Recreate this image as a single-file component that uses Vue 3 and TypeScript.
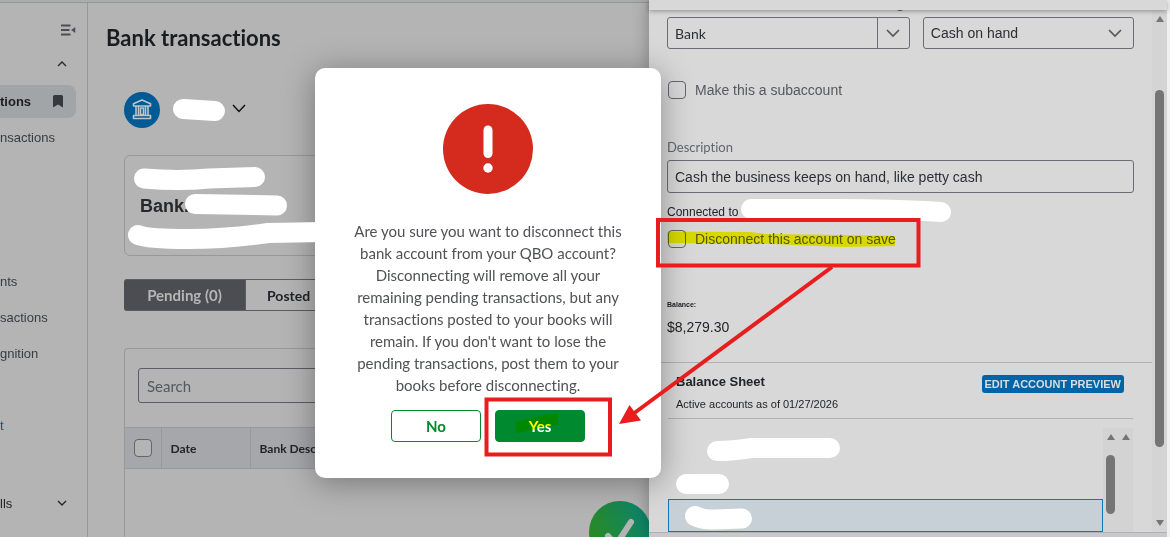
<script setup lang="ts">
import { ref } from 'vue'

interface NavItem {
  label: string
  kind?: 'active' | 'link' | 'group'
}

const navGroups: NavItem[][] = [
  [{ label: 'tions', kind: 'active' }, { label: 'nsactions' }],
  [{ label: 'nts' }, { label: 'sactions' }, { label: 'gnition' }],
  [{ label: 't', kind: 'link' }],
  [{ label: 'lls', kind: 'group' }],
]

const accountType = ref('Bank')
const detailType = ref('Cash on hand')
const description = ref('Cash the business keeps on hand, like petty cash')
const subaccount = ref(false)
const disconnect = ref(false)
const search = ref('')
</script>

<template>
  <div class="page">
    <div class="topbar"></div>
    <div class="shell">
      <nav class="sidebar">
        <button class="icon-btn collapse" aria-label="Collapse menu">
          <svg width="16" height="12" viewBox="0 0 16 12">
            <path d="M1 1.500h9.500M1 6h8.500M1 10.500h9.500" stroke="#4c4f54" stroke-width="1.800" />
            <path d="M15 3.500v5L11.500 6z" fill="#4c4f54" stroke="#4c4f54" stroke-width="0.500" />
          </svg>
        </button>
        <button class="icon-btn fold" aria-label="Fold section">
          <svg width="10" height="6" viewBox="0 0 10 6">
            <path d="M1 5l4-4 4 4" fill="none" stroke="#26282b" stroke-width="1.400" />
          </svg>
        </button>
        <ul v-for="(group, i) in navGroups" :key="i" class="nav-group">
          <li v-for="item in group" :key="item.label">
            <a href="#" :class="['nav-item', item.kind]">
              <span>{{ item.label }}</span>
              <svg v-if="item.kind === 'active'" width="10" height="13" viewBox="0 0 10 13">
                <path d="M0 1.500Q0 0 1.500 0h7Q10 0 10 1.500V12.500L5 9.500 0 12.500z" fill="#363a3f" />
              </svg>
              <svg v-if="item.kind === 'group'" width="10" height="6" viewBox="0 0 10 6">
                <path d="M1 1l4 4 4-4" fill="none" stroke="#26282b" stroke-width="1.400" />
              </svg>
            </a>
          </li>
        </ul>
      </nav>

      <main class="main">
        <h1>Bank transactions</h1>
        <div class="content">
          <div class="account">
            <svg width="36" height="36" viewBox="0 0 36 36">
              <circle cx="18" cy="18" r="18" fill="#005a96" />
              <g fill="none" stroke="#bfc4c8" stroke-width="1.600" stroke-linejoin="round">
                <path d="M9.500 14v-2.200L18 8l8.500 3.800V14z" />
                <path d="M12 14v9M14.500 14v9M21.500 14v9M24 14v9" />
                <path d="M16.500 16h3v6.500h-3z" />
                <path d="M9.500 23.500h17v3h-17z" />
              </g>
            </svg>
            <button class="icon-btn" aria-label="Choose account">
              <svg width="14" height="12" viewBox="0 0 14 12">
                <path d="M1 1l6 6.500L13 1" fill="none" stroke="#111" stroke-width="1.500" />
              </svg>
            </button>
          </div>

          <section class="card"><strong>Bank.</strong></section>

          <div class="tabs">
            <button class="tab selected">Pending (0)</button>
            <button class="tab">Posted</button>
          </div>

          <section class="panel">
            <div class="search">
              <input v-model="search" type="text" placeholder="Search" aria-label="Search" />
            </div>
            <table>
              <thead>
                <tr>
                  <th class="pick"><input type="checkbox" aria-label="Select all" /></th>
                  <th class="date">Date</th>
                  <th>Bank Desc</th>
                </tr>
              </thead>
            </table>
          </section>
        </div>
      </main>
    </div>

    <svg class="done" width="62" height="62" viewBox="0 0 62 62">
      <defs>
        <linearGradient id="done-fill" x1="0" y1="0.7" x2="1" y2="0.3">
          <stop offset="0" stop-color="#2b8a1c" />
          <stop offset="1" stop-color="#0d8570" />
        </linearGradient>
      </defs>
      <circle cx="31" cy="31" r="31" fill="url(#done-fill)" />
      <path d="M19 35l8 9L42 21" fill="none" stroke="#b4b4b4" stroke-width="6" stroke-linecap="round" stroke-linejoin="round" />
    </svg>

    <aside class="drawer">
      <div class="drawer-head"></div>
      <div class="drawer-body">
        <form class="form" @submit.prevent>
          <div class="fields">
            <div class="combo">
              <input v-model="accountType" type="text" aria-label="Account type" />
              <button type="button" aria-label="Open account types">
                <svg width="14" height="9" viewBox="0 0 14 9">
                  <path d="M1 1l6 6 6-6" fill="none" stroke="#55585e" stroke-width="1.700" />
                </svg>
              </button>
            </div>
            <div class="select">
              <select v-model="detailType" aria-label="Detail type">
                <option>Cash on hand</option>
              </select>
              <svg width="14" height="9" viewBox="0 0 14 9">
                <path d="M1 1l6 6 6-6" fill="none" stroke="#55585e" stroke-width="1.700" />
              </svg>
            </div>
          </div>
          <label class="check sub"><input v-model="subaccount" type="checkbox" /><span>Make this a subaccount</span></label>
          <label class="desc-label" for="description">Description</label>
          <input id="description" v-model="description" class="desc" type="text" />
          <p class="connected">Connected to</p>
          <label class="check"><input v-model="disconnect" type="checkbox" /><span>Disconnect this account on save</span></label>
          <p class="balance-label">Balance:</p>
          <p class="balance">$8,279.30</p>
          <section class="preview">
            <header>
              <div>
                <h2>Balance Sheet</h2>
                <p>Active accounts as of 01/27/2026</p>
              </div>
              <button type="button" class="edit">EDIT ACCOUNT PREVIEW</button>
            </header>
            <div class="list">
              <div class="rows"><div class="row-selected"></div></div>
              <div class="tracks">
                <div class="track">
                  <i class="arrow up"></i>
                  <i class="thumb"></i>
                </div>
                <div class="track"><i class="arrow up"></i></div>
              </div>
            </div>
          </section>
        </form>
        <div class="scrollbar">
          <i class="arrow up"></i>
          <i class="thumb"></i>
          <i class="arrow down"></i>
        </div>
      </div>
      <div class="drawer-foot"></div>
    </aside>

    <div class="overlay">
      <div class="modal" role="dialog" aria-modal="true" aria-describedby="warning">
        <svg width="90" height="90" viewBox="0 0 90 90">
          <circle cx="45" cy="45" r="45" fill="#d52b1e" />
          <path d="M45 26v23.500" stroke="#fff" stroke-width="9" stroke-linecap="round" />
          <circle cx="45" cy="64" r="4.700" fill="#fff" />
        </svg>
        <p id="warning">
          Are you sure you want to disconnect this<br />bank account from your QBO account?<br />Disconnecting
          will remove all your<br />remaining pending transactions, but any<br />transactions posted to your books
          will<br />remain. If you don't want to lose the<br />pending transactions, post them to your<br />books
          before disconnecting.
        </p>
        <div class="actions">
          <button class="no">No</button>
          <button class="yes">Yes</button>
        </div>
      </div>
    </div>

    <svg class="marks highlight" width="1170" height="537" aria-hidden="true">
      <path d="M667 231.500L750 232l15 2 80 1 50 1v10l-50 1-30-1-40-2-108-1z" fill="#ff0" />
      <path d="M516 421.500l30-7 12-1v11l-12 2-30 7z" fill="#ff0" />
    </svg>

    <svg class="marks" width="1170" height="537" aria-hidden="true">
      <g fill="none" stroke="#fff" stroke-width="20" stroke-linecap="round" stroke-linejoin="round">
        <path d="M183 109l32 2" />
        <path d="M144 178.500q35 3 65 0l46-1.500" />
        <path d="M195 204l82 1.500" />
        <path d="M138 235q10 4 50 4t80-6l55-1" />
        <path d="M751 209h85q60 0 105 3" />
        <path d="M717 451q15 0 35-3h78" />
        <path d="M686 484h33" />
        <path d="M695 516q8 4 20 3.500t27-1" />
      </g>
      <path d="M897 10q3 2 6 0z" fill="#44464a" />
      <g fill="none" stroke="#e91d1d" stroke-width="4">
        <path d="M658 220h260.500v45.500H658z" />
        <path d="M486.500 399.500h123.500v55H486.500z" />
        <path d="M832 267L633 414" />
      </g>
      <path d="M619 424l10.500-19 11.500 15.500z" fill="#e91d1d" />
    </svg>
  </div>
</template>

<style>
body {
  margin: 0;
  background: #b4b4b4;
}
</style>

<style scoped>
* {
  box-sizing: border-box;
}
.page {
  position: relative;
  display: flex;
  flex-direction: column;
  min-height: 100vh;
  overflow: hidden;
  background: #b4b4b4;
  color: #222427;
  font-family: "Liberation Sans", Arial, sans-serif;
  font-size: 14px;
  font-variant-ligatures: none;
}
button,
input,
select {
  font: inherit;
  font-variant-ligatures: none;
  color: inherit;
  margin: 0;
}
h1,
h2,
p,
ul {
  margin: 0;
  padding: 0;
}
svg {
  display: block;
  flex: none;
}
.topbar {
  height: 3px;
  background: #a9aeab;
  border-bottom: 1px solid #9396a0;
}
.shell {
  display: flex;
  flex: 1;
}
.icon-btn {
  display: block;
  padding: 0;
  border: 0;
  background: none;
}
.sidebar {
  width: 88px;
  flex: none;
  display: flex;
  flex-direction: column;
  border-right: 1px solid #96989c;
}
.collapse {
  margin: 21px 0 0 60px;
}
.fold {
  margin: 25px 0 0 57px;
}
.nav-group {
  list-style: none;
  margin-top: 16px;
}
.nav-group:nth-of-type(2) {
  margin-top: 108px;
}
.nav-group:nth-of-type(3) {
  margin-top: 36px;
}
.nav-group:nth-of-type(4) {
  margin-top: 42px;
}
.nav-item {
  display: flex;
  align-items: center;
  justify-content: space-between;
  height: 36px;
  width: 76px;
  font-size: 13px;
  color: #393c42;
  text-decoration: none;
}
.nav-item.active {
  height: 33px;
  margin: 2px 0 1px;
  padding-right: 13px;
  border-radius: 0 8px 8px 0;
  background: #a2a5a8;
  color: #1c1e21;
  font-weight: 700;
}
.nav-item.link {
  color: #1f4f80;
}
.nav-item.group {
  padding-right: 9px;
  color: #222427;
}
.main {
  flex: 1;
  padding: 21px 0 0 18px;
  display: flex;
  flex-direction: column;
}
h1 {
  font-family: Lato, sans-serif;
  font-size: 22px;
  line-height: 28px;
  font-weight: 700;
  color: #1a1c20;
}
.content {
  flex: 1;
  display: flex;
  flex-direction: column;
  padding: 40px 0 0 18px;
}
.account {
  display: flex;
  align-items: center;
  gap: 72px;
}
.card {
  height: 101px;
  margin-top: 27px;
  padding: 40px 15px;
  border: 1px solid #96989c;
  border-radius: 6px;
  font-size: 18px;
  line-height: 20px;
  color: #26282b;
}
.tabs {
  display: flex;
  margin-top: 23px;
  font-family: Lato, sans-serif;
}
.tab {
  height: 32px;
  padding: 0 21px;
  border: 1px solid #5b5d63;
  border-left: 0;
  background: none;
  font-size: 14px;
  font-weight: 700;
}
.tab.selected {
  width: 122px;
  padding: 0;
  border-radius: 3px 0 0 3px;
  background: #4c4d52;
  color: #b4b6b8;
  font-size: 15px;
}
.panel {
  flex: 1;
  margin-top: 37px;
  border: 1px solid #96989c;
  border-bottom: 0;
  border-radius: 4px 4px 0 0;
  font-family: Lato, sans-serif;
}
.search {
  padding: 19px 13px 24px;
}
.search input {
  display: block;
  width: 60%;
  height: 35px;
  padding: 0 8px;
  border: 1px solid #5b5d63;
  border-radius: 3px;
  background: none;
  font-size: 15px;
}
.search input::placeholder {
  color: #55585e;
  opacity: 1;
}
table {
  width: 100%;
  border-collapse: collapse;
  table-layout: fixed;
}
th {
  height: 41px;
  padding: 0 9px;
  border: 1px solid #96989c;
  border-left: 0;
  background: #a5a7aa;
  font-size: 12px;
  font-weight: 700;
  text-align: left;
}
.pick {
  width: 36px;
}
.date {
  width: 89px;
}
input[type="checkbox"] {
  appearance: none;
  display: block;
  flex: none;
  width: 18px;
  height: 18px;
  border: 1px solid #63666c;
  border-radius: 4px;
}
.pick input {
  background: #b4b4b4;
}
.done {
  position: absolute;
  left: 589px;
  top: 501px;
}
.drawer {
  position: absolute;
  top: 0;
  right: 0;
  bottom: 0;
  width: 521px;
  display: flex;
  flex-direction: column;
  background: #d8d8d8;
  border-right: 3px solid #f0f0f0;
  box-shadow: 0 0 16px rgba(0, 0, 0, 0.3);
}
.drawer-head {
  position: relative;
  flex: none;
  height: 10px;
  background: #d8d8d8;
  box-shadow: 0 1px 5px rgba(0, 0, 0, 0.35);
}
.drawer-body {
  flex: 1;
  display: flex;
  min-height: 0;
}
.drawer-foot {
  flex: none;
  height: 5px;
  background: #c9c9cb;
  border-top: 1px solid #b0b1b4;
}
.form {
  flex: 1;
  display: flex;
  flex-direction: column;
  padding: 7px 18px 0;
}
.fields {
  display: flex;
  gap: 13px;
}
.combo {
  display: flex;
  flex: 243;
  height: 32px;
  border: 1px solid #6b6e75;
  border-radius: 3px;
}
.combo input {
  flex: 1;
  min-width: 0;
  padding: 0 7px;
  border: 0;
  background: none;
  color: #2d2f33;
  font-family: Lato, sans-serif;
  font-size: 14px;
}
.combo button {
  width: 32px;
  padding: 0 8px;
  border: 0;
  border-left: 1px solid #6b6e75;
  background: none;
}
.select {
  position: relative;
  display: flex;
  flex: 211;
  align-items: center;
  height: 32px;
  border: 1px solid #6b6e75;
  border-radius: 3px;
}
.select select {
  appearance: none;
  width: 100%;
  height: 100%;
  padding: 0 7px;
  border: 0;
  background: none;
  color: #2d2f33;
}
.select svg {
  position: absolute;
  right: 11px;
  pointer-events: none;
}
.check {
  display: flex;
  align-items: center;
  gap: 9px;
  height: 18px;
  margin: 10px 0 0 1px;
  line-height: 18px;
  color: #55585e;
}
.check.sub {
  margin-top: 32px;
}
.desc-label {
  margin-top: 40px;
  font-family: Lato, sans-serif;
  font-size: 13px;
  line-height: 16px;
  color: #63666c;
}
.desc {
  height: 33px;
  margin-top: 5px;
  padding: 0 7px;
  border: 1px solid #6b6e75;
  border-radius: 3px;
  background: none;
  color: #2d2f33;
}
.connected {
  margin-top: 11px;
  font-size: 12px;
  line-height: 16px;
}
.balance-label {
  margin-top: 53px;
  font-size: 7px;
  line-height: 8px;
  font-weight: 700;
}
.balance {
  margin-top: 10px;
  line-height: 16px;
}
.preview {
  flex: 1;
  display: flex;
  flex-direction: column;
  margin: 27px -18px 0;
  padding: 0 19px;
  border-top: 1px solid #b0b1b4;
}
.preview header {
  display: flex;
  justify-content: space-between;
  align-items: flex-start;
  height: 56px;
  padding: 11px 9px 0 8px;
  border-bottom: 1px solid #b0b1b4;
}
.preview h2 {
  font-size: 13px;
  line-height: 16px;
}
.preview p {
  margin-top: 6px;
  font-size: 11px;
  line-height: 16px;
}
.edit {
  height: 18px;
  margin-top: 1px;
  padding: 0 3px;
  border: 0;
  border-radius: 3px;
  background: #0065a8;
  color: #d8dde2;
  font-size: 11px;
  font-weight: 700;
}
.list {
  flex: 1;
  display: flex;
  padding-top: 9px;
}
.rows {
  flex: 1;
  display: flex;
  flex-direction: column;
  justify-content: flex-end;
}
.row-selected {
  height: 33px;
  border: 1px solid #0b7ab8;
  background: #c6d0d6;
}
.tracks {
  display: flex;
  background: #d3d3d3;
}
.track {
  display: flex;
  flex-direction: column;
  align-items: center;
  width: 15px;
  padding-top: 6px;
}
.track .thumb {
  width: 9px;
  height: 59px;
  margin-top: 15px;
  border-radius: 5px;
  background: #757575;
}
.arrow {
  border: 4px solid transparent;
}
.arrow.up {
  border-top: 0;
  border-bottom: 6px solid #757575;
}
.arrow.down {
  border-bottom: 0;
  border-top: 6px solid #757575;
}
.scrollbar {
  display: flex;
  flex-direction: column;
  align-items: center;
  width: 15px;
  padding: 6px 0;
  background: #d4d4d4;
}
.scrollbar .thumb {
  width: 9px;
  height: 70%;
  margin: 68px 0 auto;
  border-radius: 5px;
  background: #757575;
}
.overlay {
  position: absolute;
  inset: 0;
  display: flex;
  align-items: flex-start;
  justify-content: center;
  padding: 68px 194px 0 0;
}
.modal {
  display: flex;
  flex-direction: column;
  align-items: center;
  width: 346px;
  padding: 36px 20px;
  border-radius: 10px;
  background: #fff;
  box-shadow: 0 4px 32px rgba(0, 0, 0, 0.35);
}
.modal p {
  margin-top: 26px;
  font-family: Lato, sans-serif;
  font-size: 15px;
  line-height: 22px;
  color: #505256;
  text-align: center;
  white-space: nowrap;
}
.actions {
  display: flex;
  gap: 14px;
  margin-top: 14px;
}
.actions button {
  width: 90px;
  height: 32px;
  border: 1px solid #00892e;
  border-radius: 4px;
  font-family: Lato, sans-serif;
  font-size: 15px;
  font-weight: 700;
}
.actions .no {
  background: #fff;
  color: #00892e;
}
.actions .yes {
  background: #00892e;
  color: #fff;
}
.marks {
  position: absolute;
  left: 0;
  top: 0;
  pointer-events: none;
}
.highlight {
  mix-blend-mode: multiply;
}
</style>
